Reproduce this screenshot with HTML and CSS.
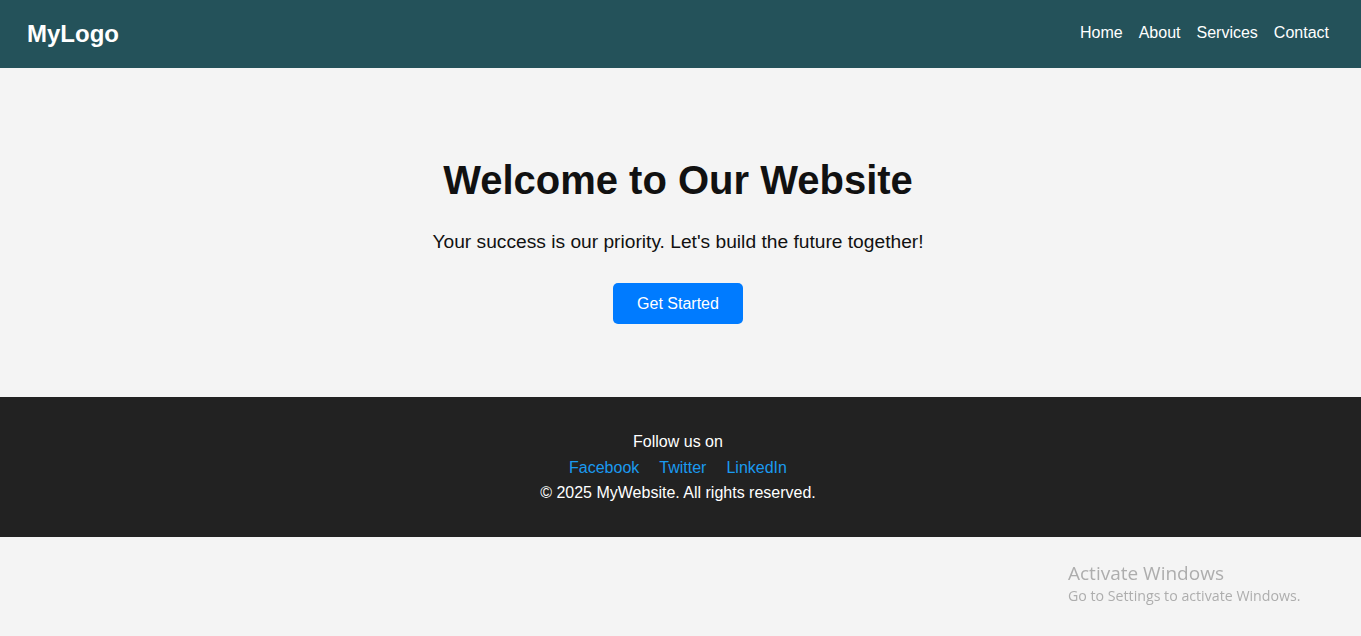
FILE: index.html
```html
<!DOCTYPE html>
<html lang="en">
<head>
<meta charset="UTF-8">
<title>MyWebsite</title>
<link rel="stylesheet" href="styles.css">
</head>
<body>
<header class="site-header">
  <div class="logo">MyLogo</div>
  <nav class="nav">
    <a href="#">Home</a>
    <a href="#">About</a>
    <a href="#">Services</a>
    <a href="#">Contact</a>
  </nav>
</header>
<section class="hero">
  <h1 class="hero-title">Welcome to Our Website</h1>
  <p class="hero-text">Your success is our priority. Let's build the future together!</p>
  <a href="#" class="btn">Get Started</a>
</section>
<footer class="site-footer">
  <p class="footer-line">Follow us on</p>
  <div class="footer-links">
    <a href="#">Facebook</a>
    <a href="#">Twitter</a>
    <a href="#">LinkedIn</a>
  </div>
  <p class="footer-line">&copy; 2025 MyWebsite. All rights reserved.</p>
</footer>
<div class="watermark">
  <div class="wm-title">Activate Windows</div>
  <div class="wm-sub">Go to Settings to activate Windows.</div>
</div>
</body>
</html>
```
FILE: styles.css
```css
* { box-sizing: border-box; }
html, body {
  margin: 0;
  padding: 0;
  background: #f4f4f4;
  font-family: "Liberation Sans", Arial, sans-serif;
  color: #000;
}
.site-header {
  height: 68px;
  background: #24525a;
  display: flex;
  align-items: center;
  justify-content: space-between;
  padding: 0 32px 0 27px;
}
.logo {
  color: #fff;
  font-size: 24px;
  font-weight: bold;
  margin-bottom: 1px;
}
.nav {
  display: flex;
  gap: 16px;
  margin-bottom: 2px;
}
.nav a {
  color: #fff;
  text-decoration: none;
  font-size: 16px;
}
.hero {
  display: flex;
  flex-direction: column;
  align-items: center;
  text-align: center;
  padding: 89px 25px 73px 20px;
}
.hero-title {
  margin: 0;
  font-size: 40px;
  line-height: 46px;
  font-weight: bold;
  color: #111;
}
.hero-text {
  margin: 28px 0 0;
  font-size: 19.2px;
  line-height: 22px;
  color: #111;
}
.btn {
  margin-top: 30px;
  display: inline-block;
  background: #007bff;
  color: #fff;
  text-decoration: none;
  font-size: 16px;
  line-height: 19px;
  padding: 11px 24px;
  border-radius: 5px;
}
.site-footer {
  background: #222;
  color: #fff;
  text-align: center;
  padding: 32px 20px 31px 15px;
  font-size: 16px;
  line-height: 25.5px;
}
.footer-line { margin: 0; }
.footer-links {
  display: flex;
  justify-content: center;
  gap: 20px;
}
.footer-links a {
  color: #1a9af0;
  text-decoration: none;
}
.watermark {
  position: fixed;
  left: 1068px;
  top: 560px;
  color: rgba(150,150,150,0.75);
  font-family: "Open Sans", "Noto Sans", sans-serif;
  pointer-events: none;
}
.wm-title { font-size: 19px; line-height: 26px; }
.wm-sub { font-size: 14.2px; line-height: 20px; }
```
